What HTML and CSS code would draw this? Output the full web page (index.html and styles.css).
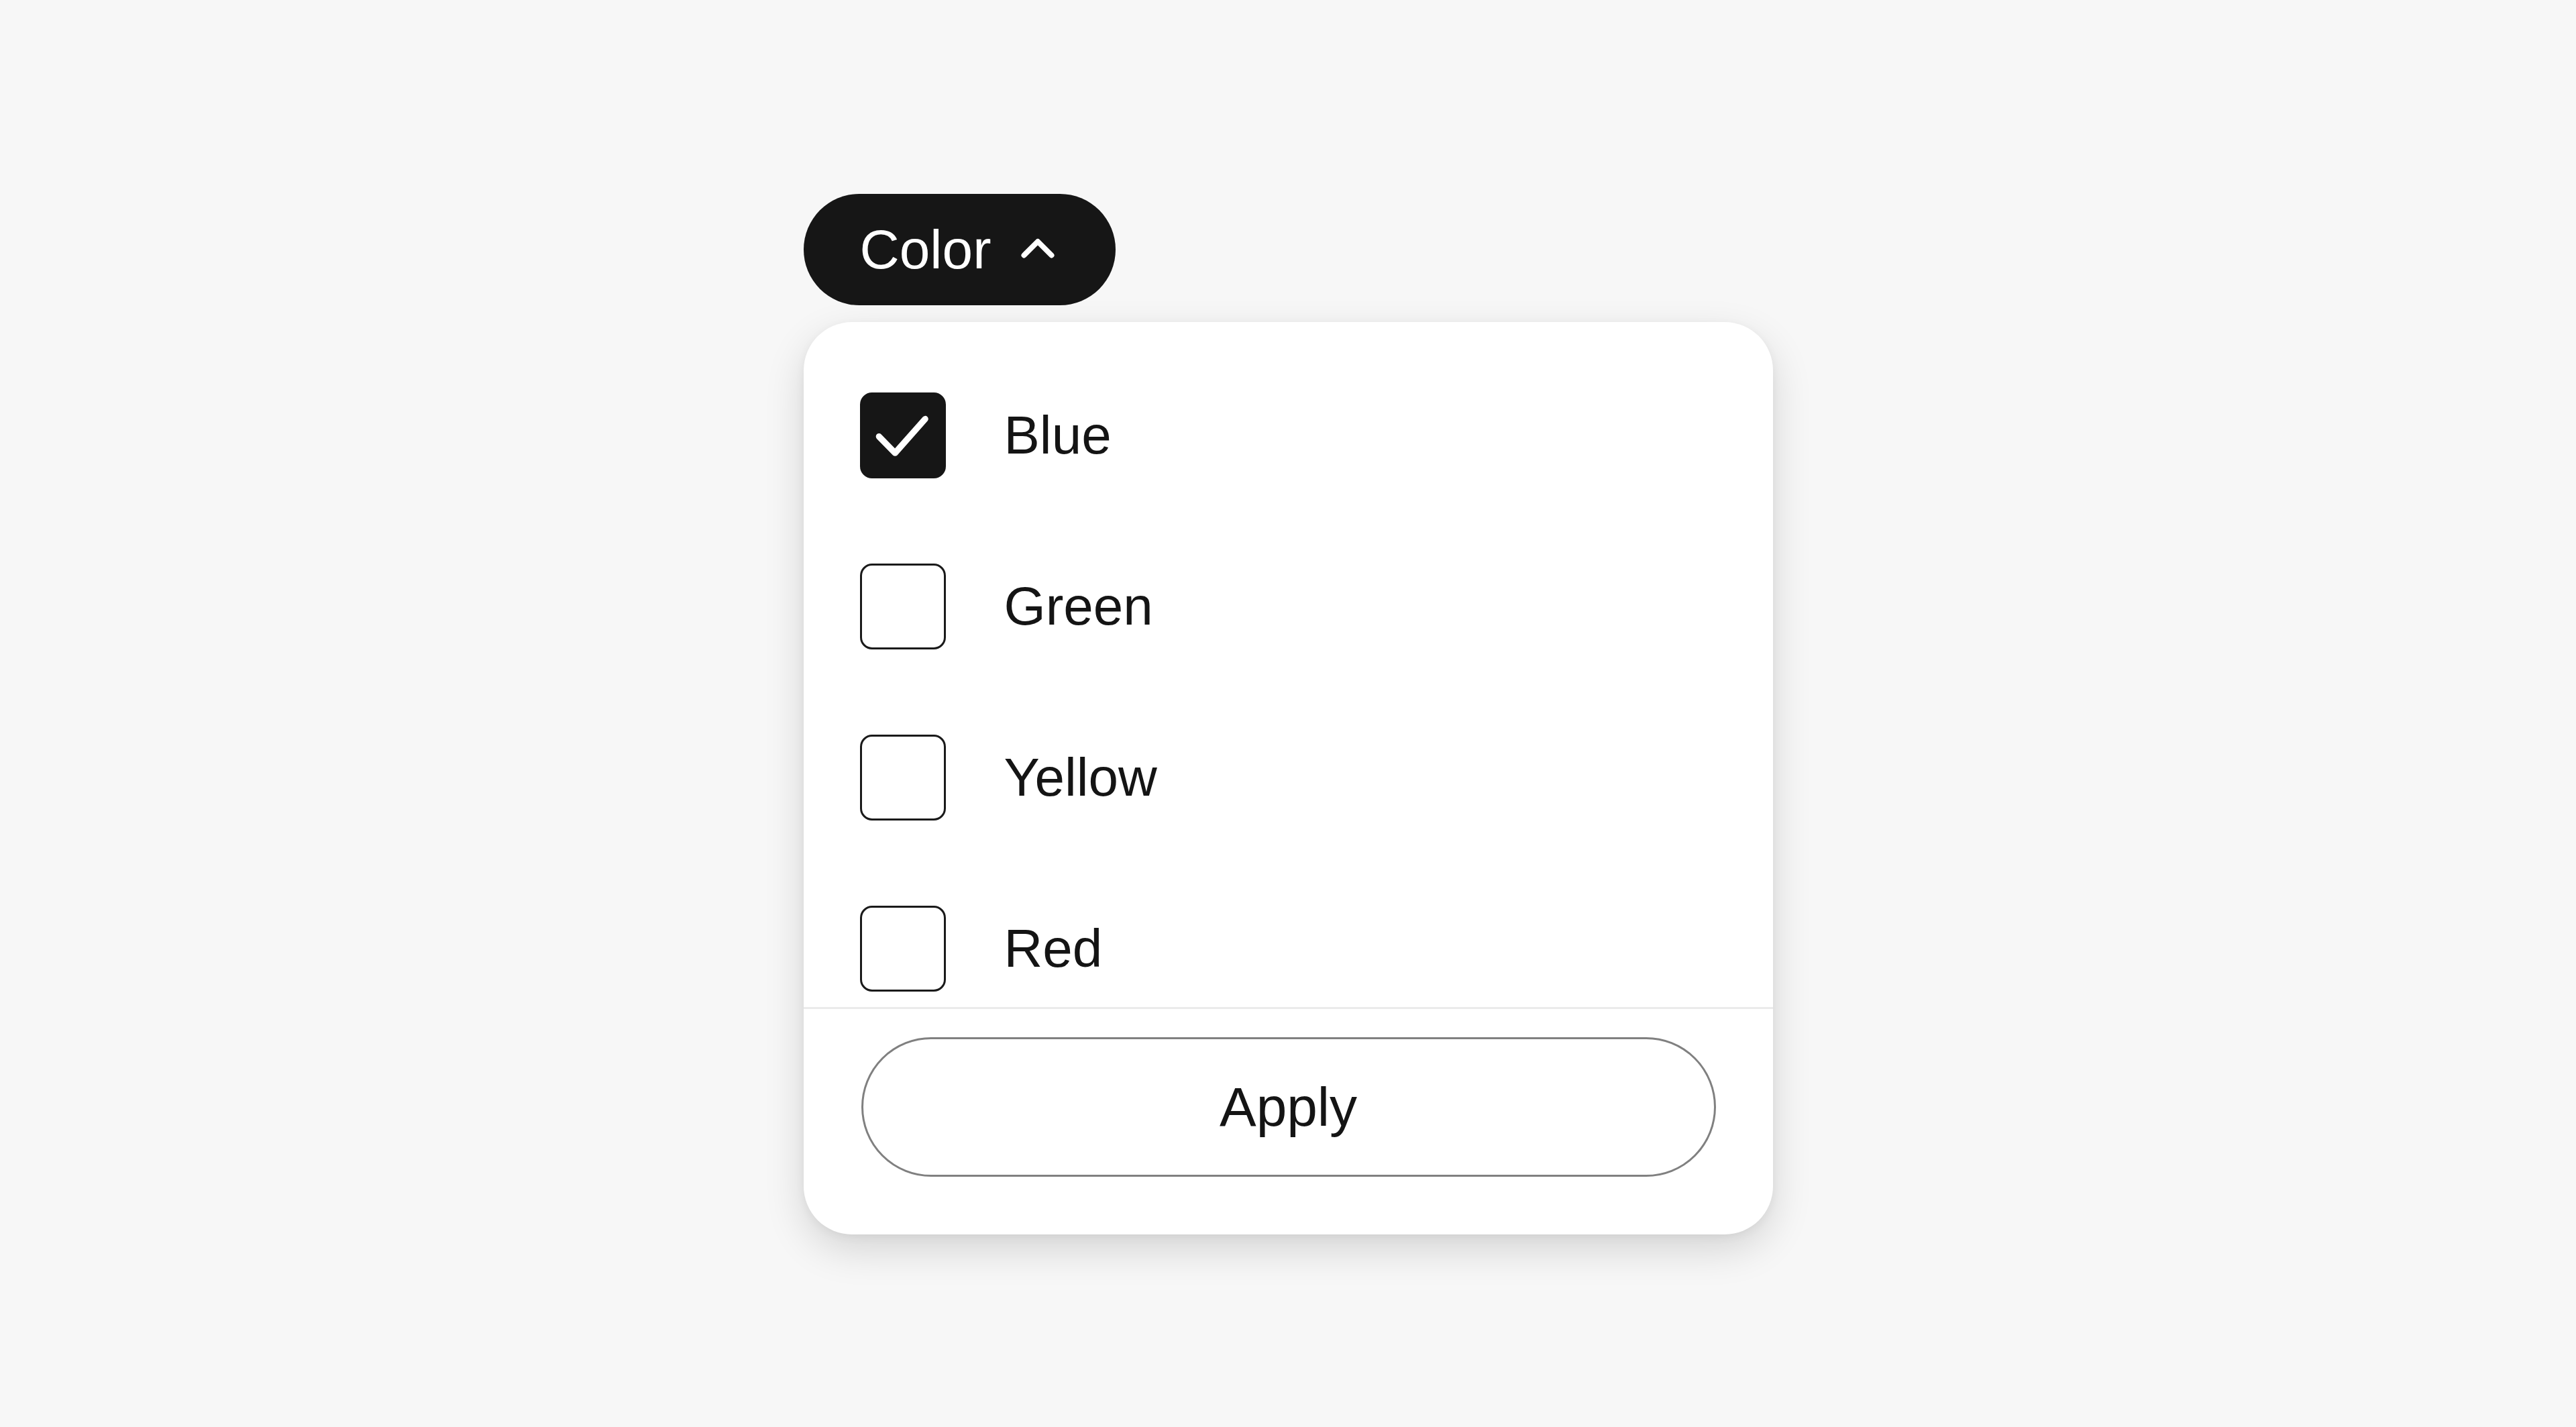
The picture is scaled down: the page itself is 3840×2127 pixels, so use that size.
FILE: index.html
```html
<!DOCTYPE html>
<html lang="en">
<head>
<meta charset="utf-8">
<title>Color filter</title>
<link rel="stylesheet" href="styles.css">
</head>
<body>
<div class="wrap">
  <button class="trigger" type="button">
    <span class="trigger-label">Color</span>
    <svg class="chevron" width="50" height="30" viewBox="0 0 50 30" aria-hidden="true">
      <path d="M4.5 25.5 L25 5 L45.5 25.5" fill="none" stroke="#ffffff" stroke-width="8" stroke-linecap="round" stroke-linejoin="round"/>
    </svg>
  </button>
  <div class="panel">
    <div class="list">
      <label class="row">
        <span class="box checked">
          <svg class="check" width="128" height="128" viewBox="0 0 24 24" aria-hidden="true">
            <path d="M5.5 12.5 L10 17.1 L18.4 7.6" fill="none" stroke="#ffffff" stroke-width="1.75" stroke-linecap="round" stroke-linejoin="round"/>
          </svg>
        </span>
        <span class="label">Blue</span>
      </label>
      <label class="row">
        <span class="box"></span>
        <span class="label">Green</span>
      </label>
      <label class="row">
        <span class="box"></span>
        <span class="label">Yellow</span>
      </label>
      <label class="row">
        <span class="box"></span>
        <span class="label">Red</span>
      </label>
    </div>
    <div class="footer">
      <button class="apply" type="button">Apply</button>
    </div>
  </div>
</div>
</body>
</html>
```
FILE: styles.css
```css
* {
  box-sizing: border-box;
}

html, body {
  margin: 0;
  padding: 0;
  background: #f7f7f7;
}

body {
  font-family: "Liberation Sans", Arial, sans-serif;
  color: #141414;
  height: 2127px;
  overflow: hidden;
}

.wrap {
  width: 1445px;
  margin: 0 auto;
  padding-top: 289px;
  display: flex;
  flex-direction: column;
  align-items: flex-start;
}

.trigger {
  height: 166px;
  display: flex;
  align-items: center;
  padding: 0 91px 0 84px;
  border: none;
  border-radius: 999px;
  background: #161616;
  color: #ffffff;
  font-family: "Liberation Sans", Arial, sans-serif;
  font-size: 82px;
  line-height: 1;
  cursor: pointer;
}

.trigger-label {
  display: block;
}

.chevron {
  display: block;
  margin-left: 45px;
  margin-top: -4px;
}

.panel {
  width: 1445px;
  margin-top: 25px;
  background: #ffffff;
  border-radius: 72px;
  box-shadow: 0 22px 60px rgba(0, 0, 0, 0.14), 0 4px 14px rgba(0, 0, 0, 0.05);
  display: flex;
  flex-direction: column;
  overflow: hidden;
}

.list {
  height: 1021px;
  overflow: hidden;
  padding-top: 41px;
  display: flex;
  flex-direction: column;
}

.row {
  flex: 0 0 255px;
  height: 255px;
  display: flex;
  align-items: center;
  padding: 0 84px;
}

.box {
  width: 128px;
  height: 128px;
  flex: 0 0 128px;
  border: 3.5px solid #1a1a1a;
  border-radius: 18px;
  background: #ffffff;
  position: relative;
}

.box.checked {
  background: #161616;
  border-color: #161616;
}

.check {
  position: absolute;
  left: -3.5px;
  top: -3.5px;
}

.label {
  margin-left: 87px;
  font-size: 80px;
  color: #141414;
}

.footer {
  border-top: 3px solid #ebebeb;
  padding: 42px 85px 86px 86px;
}

.apply {
  width: 100%;
  height: 208px;
  display: flex;
  align-items: center;
  justify-content: center;
  border: 3.5px solid #808080;
  border-radius: 999px;
  background: #ffffff;
  color: #141414;
  font-family: "Liberation Sans", Arial, sans-serif;
  font-size: 82px;
  cursor: pointer;
}
```
